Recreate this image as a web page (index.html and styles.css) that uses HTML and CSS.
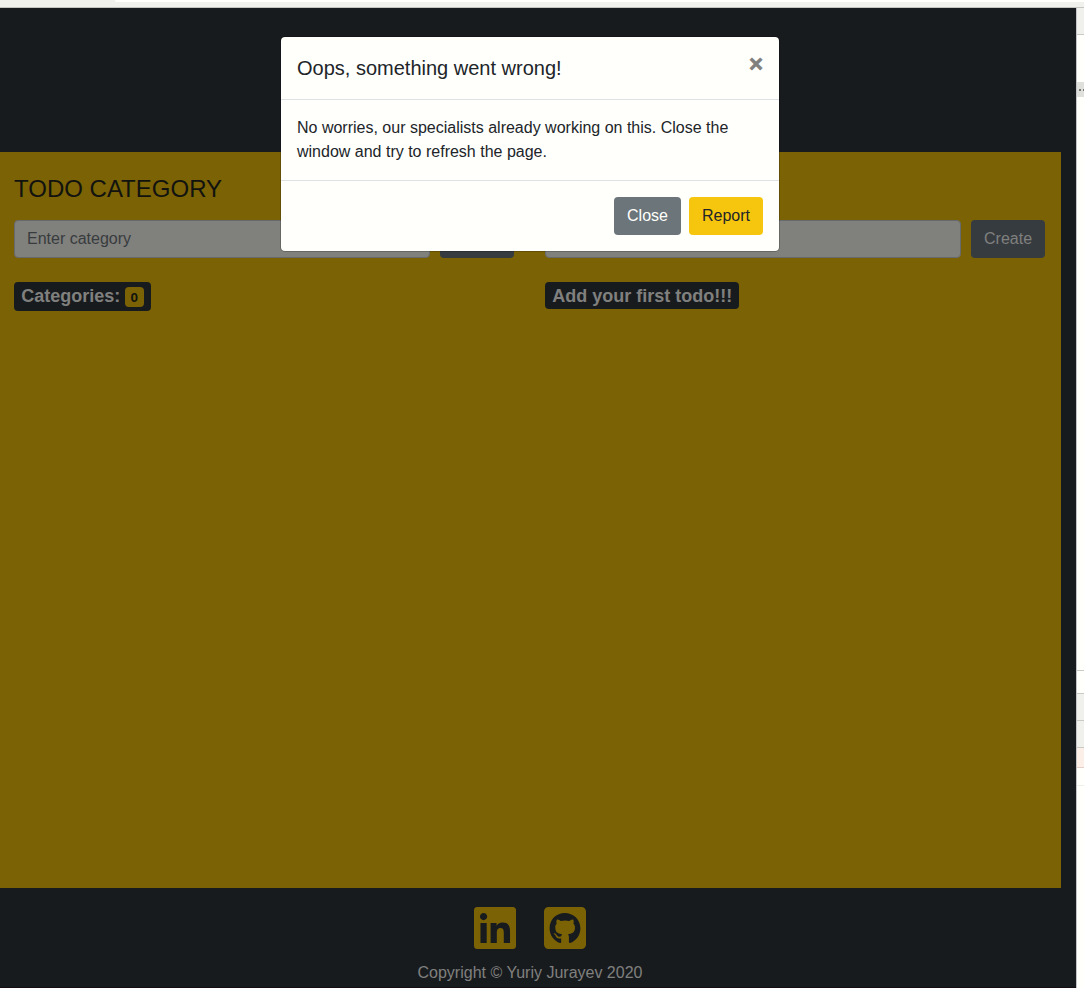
FILE: index.html
```html
<!DOCTYPE html>
<html lang="en">
<head>
<meta charset="utf-8">
<title>Todo</title>
<link rel="stylesheet" href="styles.css">
</head>
<body>
<div class="toolbar"><div class="address"></div></div>
<div class="workspace">
  <div class="page">
    <header class="banner"></header>
    <main class="main">
      <section class="column">
        <h4 class="heading">TODO CATEGORY</h4>
        <form class="entry">
          <input class="field" type="text" placeholder="Enter category">
          <button class="btn btn-dim" type="button">Create</button>
        </form>
        <div><span class="badge badge-counted">Categories: <span class="count">0</span></span></div>
      </section>
      <section class="column">
        <h4 class="heading">TODO</h4>
        <form class="entry">
          <input class="field" type="text">
          <button class="btn btn-dim" type="button">Create</button>
        </form>
        <div><span class="badge">Add your first todo!!!</span></div>
      </section>
    </main>
    <footer class="footer">
      <div class="social">
        <svg viewBox="0 32 448 448"><path d="M416 32H31.9C14.3 32 0 46.5 0 64.3v383.4C0 465.5 14.3 480 31.9 480H416c17.6 0 32-14.5 32-32.3V64.3c0-17.8-14.4-32.3-32-32.3zM135.4 416H69V202.2h66.5V416zm-33.2-243c-21.3 0-38.5-17.3-38.5-38.5S80.9 96 102.2 96c21.2 0 38.5 17.3 38.5 38.5 0 21.3-17.2 38.5-38.5 38.5zm282.1 243h-66.4V312c0-24.8-.5-56.7-34.5-56.7-34.6 0-39.9 27-39.9 54.9V416h-66.4V202.2h63.7v29.2h.9c8.9-16.8 30.6-34.5 62.9-34.5 67.2 0 79.7 44.3 79.7 101.9V416z"/></svg>
        <svg viewBox="0 32 448 448"><path d="M400 32H48C21.5 32 0 53.5 0 80v352c0 26.5 21.5 48 48 48h352c26.5 0 48-21.5 48-48V80c0-26.5-21.5-48-48-48zM277.3 415.7c-8.4 1.5-11.5-3.7-11.5-8 0-5.4.2-33 .2-55.3 0-15.6-5.2-25.5-11.3-30.7 37-4.1 76-9.2 76-73.1 0-18.2-6.5-27.3-17.1-39 1.7-4.3 7.4-22-1.7-45-13.9-4.3-45.7 17.9-45.7 17.9-13.2-3.7-27.5-5.6-41.6-5.6-14.1 0-28.4 1.9-41.6 5.6 0 0-31.8-22.2-45.7-17.9-9.1 22.9-3.5 40.6-1.7 45-10.6 11.7-15.6 20.8-15.6 39 0 63.6 37.3 69 74.3 73.1-4.8 4.3-9.1 11.7-10.6 22.3-9.5 4.3-33.8 11.7-48.3-13.9-9.1-15.8-25.5-17.1-25.5-17.1-16.2-.2-1.1 10.2-1.1 10.2 10.8 5 18.4 24.2 18.4 24.2 9.7 29.7 56.1 19.7 56.1 19.7 0 13.9.2 36.5.2 40.6 0 4.3-3 9.5-11.5 8-66-22.1-112.2-84.9-112.2-158.3 0-91.8 70.2-161.5 162-161.5S388 165.6 388 257.4c.1 73.4-44.7 136.3-110.7 158.3z"/></svg>
      </div>
      <p class="copyright">Copyright © Yuriy Jurayev 2020</p>
    </footer>
  </div>
  <aside class="panel">
    <div class="panel-tabs"></div>
    <div class="panel-upper"></div>
    <div class="panel-more"><i></i><i></i></div>
    <div class="panel-body"></div>
    <div class="panel-strip"></div>
    <div class="panel-bar"></div>
    <div class="panel-bar"></div>
    <div class="panel-error"></div>
    <div class="panel-prompt"></div>
  </aside>
</div>
<div class="modal" role="dialog">
  <div class="modal-header">
    <h5 class="modal-title">Oops, something went wrong!</h5>
    <button class="close" type="button">×</button>
  </div>
  <div class="modal-body">No worries, our specialists already working on this. Close the window and try to refresh the page.</div>
  <div class="modal-footer">
    <button class="btn btn-secondary" type="button">Close</button>
    <button class="btn btn-warning" type="button">Report</button>
  </div>
</div>
</body>
</html>
```
FILE: styles.css
```css
* { box-sizing: border-box; }

body {
  margin: 0;
  height: 988px;
  display: flex;
  flex-direction: column;
  overflow: hidden;
  background: #181b1e;
  color: #212529;
  font: 16px/24px "Liberation Sans", Arial, sans-serif;
}

h4, h5, p { margin: 0; font-weight: 400; }

.toolbar {
  height: 8px;
  flex: none;
  background: #f0f0ed;
  border-bottom: 1px solid #c4c5c2;
}
.address {
  height: 2px;
  margin-left: 115px;
  background: #fffffc;
  border-bottom-left-radius: 2px;
}

.workspace { flex: 1; display: flex; min-height: 0; }
.page {
  flex: 1;
  display: flex;
  flex-direction: column;
  padding-right: 15px;
  border-bottom: 1px solid #160c12;
}
.banner { height: 144px; flex: none; }

.main {
  height: 736px;
  flex: none;
  display: flex;
  gap: 31px;
  padding: 22px 16px 0 14px;
  background: #7b6205;
}
.column { flex: 1; }
.heading {
  font-size: 24px;
  line-height: 29px;
  margin-bottom: 17px;
  color: #12130f;
}
.entry { display: flex; gap: 10px; margin-bottom: 24px; }
.field {
  flex: 1;
  min-width: 0;
  height: 38px;
  padding: 6px 12px;
  border: 1px solid #676a6c;
  border-radius: 4px;
  background: #80807c;
  font: inherit;
}
.field::placeholder { color: #383c3f; opacity: 1; }

.btn {
  height: 38px;
  padding: 6px 12px;
  border: 1px solid transparent;
  border-radius: 4px;
  font: inherit;
}
.btn-dim { width: 74px; background: #363b40; color: #80807e; }
.btn-secondary { background: #6b757a; color: #fffffc; }
.btn-warning { background: #f6c60e; color: #212529; }

.badge, .count {
  display: inline-block;
  padding: .25em .4em;
  border-radius: 4px;
  font-weight: 700;
  line-height: 1;
}
.badge { font-size: 18px; background: #181b1e; color: #80807e; }
.badge-counted { height: 29px; }
.count { font-size: 13.5px; background: #7b6205; color: #12130f; }

.footer {
  flex: 1;
  display: flex;
  flex-direction: column;
  align-items: center;
  padding-top: 19px;
}
.social { display: flex; gap: 28.5px; margin-bottom: 12px; padding-right: 1px; }
.social svg { width: 42px; height: 42px; fill: #7b6205; }
.copyright { color: #80807e; padding-right: 1px; }

.panel {
  width: 8px;
  flex: none;
  background: #fffffc;
  border-left: 1px solid #c4c5c8;
}
.panel-tabs { height: 27px; background: #f0f0ed; border-bottom: 1px solid #c9cac8; }
.panel-upper { height: 47px; }
.panel-more {
  height: 15px;
  display: flex;
  align-items: center;
  gap: 2px;
  padding-left: 2px;
  background: #dfdfdc;
}
.panel-more i { width: 2px; height: 2px; background: #777; }
.panel-body { height: 574px; border-bottom: 1px solid #c9cac8; }
.panel-strip { height: 23px; border-bottom: 1px solid #c9cac8; }
.panel-bar { height: 27px; background: #f0f0ed; border-bottom: 1px solid #c9cac8; }
.panel-error { height: 20px; background: #fbefe8; border-bottom: 1px solid #e3cfc9; }
.panel-prompt { height: 18px; border-bottom: 1px solid #eeeeec; }

.modal {
  position: absolute;
  left: 280px;
  top: 36px;
  width: 500px;
  border: 1px solid rgba(0, 0, 0, .2);
  border-radius: 5px;
  background: #fffffc;
  background-clip: padding-box;
}
.modal-header {
  display: flex;
  justify-content: space-between;
  align-items: flex-start;
  padding: 16px;
  border-bottom: 1px solid #dee2e6;
}
.modal-title { font-size: 20px; line-height: 30px; }
.close {
  margin: -17px -16px -16px;
  padding: 16px;
  border: 0;
  background: none;
  color: #80807e;
  -webkit-text-stroke: .7px #80807e;
  font: 700 24px/24px "Liberation Sans", Arial, sans-serif;
}
.modal-body { padding: 16px; }
.modal-footer {
  display: flex;
  justify-content: flex-end;
  gap: 8px;
  padding: 16px;
  border-top: 1px solid #dee2e6;
}
```
